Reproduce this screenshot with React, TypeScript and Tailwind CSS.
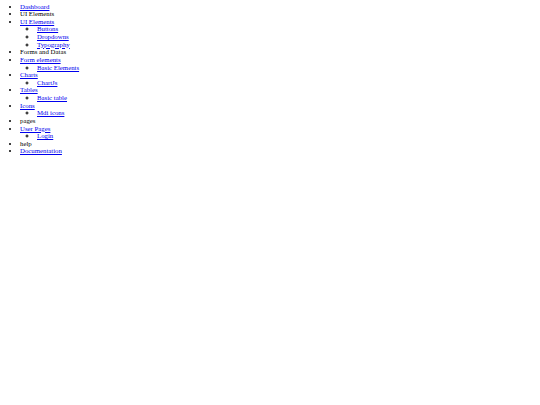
import React from 'react';

type Item = { label: string; href?: string; children?: string[] };

const items: Item[] = [
  { label: 'Dashboard', href: '#' },
  { label: 'UI Elements' },
  { label: 'UI Elements', href: '#', children: ['Buttons', 'Dropdowns', 'Typography'] },
  { label: 'Forms and Datas' },
  { label: 'Form elements', href: '#', children: ['Basic Elements'] },
  { label: 'Charts', href: '#', children: ['ChartJs'] },
  { label: 'Tables', href: '#', children: ['Basic table'] },
  { label: 'Icons', href: '#', children: ['Mdi icons'] },
  { label: 'pages' },
  { label: 'User Pages', href: '#', children: ['Login'] },
  { label: 'help' },
  { label: 'Documentation', href: '#' },
];

const linkCls = 'text-[#0000ee] underline';

export default function App() {
  return (
    <div className="min-h-[405px] w-[540px] bg-white pt-[2.6px] font-['Liberation_Serif',serif] text-[6.8px] leading-[7.63px] text-black">
      <ul className="list-disc pl-[20px]">
        {items.map((item, i) => (
          <li key={i}>
            {item.href ? <a href={item.href} className={linkCls}>{item.label}</a> : item.label}
            {item.children && (
              <ul className="list-[circle] pl-[17px]">
                {item.children.map((c) => (
                  <li key={c}>
                    <a href="#" className={linkCls}>{c}</a>
                  </li>
                ))}
              </ul>
            )}
          </li>
        ))}
      </ul>
    </div>
  );
}
